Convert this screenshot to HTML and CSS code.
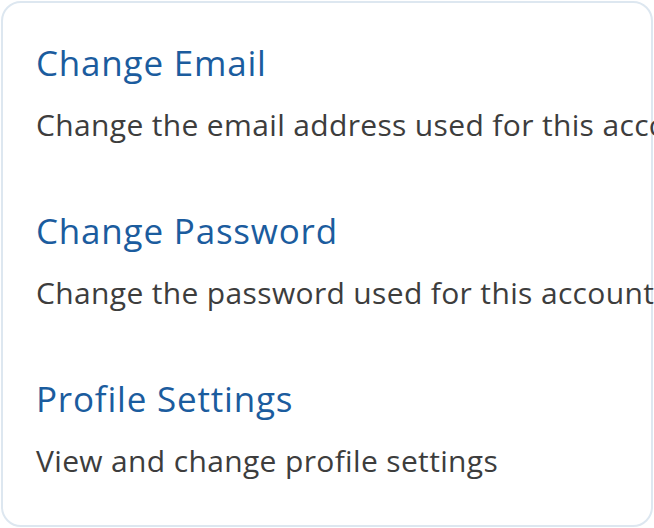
FILE: index.html
```html
<!DOCTYPE html>
<html>
<head>
<meta charset="utf-8">
<link rel="stylesheet" href="styles.css">
</head>
<body>
<div class="card">
  <div class="item">
    <h2 class="title">Change Email</h2>
    <p class="desc">Change the email address used for this account</p>
  </div>
  <div class="item">
    <h2 class="title">Change Password</h2>
    <p class="desc">Change the password used for this account</p>
  </div>
  <div class="item">
    <h2 class="title">Profile Settings</h2>
    <p class="desc">View and change profile settings</p>
  </div>
</div>
</body>
</html>
```
FILE: styles.css
```css
html, body {
  margin: 0;
  padding: 0;
  background: #ffffff;
}
body {
  padding: 1px;
  font-family: "Open Sans", "Noto Sans", sans-serif;
}
.card {
  width: 652px;
  height: 526px;
  border: 2px solid #dde7f0;
  border-radius: 20px;
  padding: 37px 0 0 33px;
  box-sizing: border-box;
  display: flex;
  flex-direction: column;
  gap: 63px;
}
.item {
  display: flex;
  flex-direction: column;
  gap: 19px;
}
.title {
  margin: 0;
  font-size: 35px;
  font-weight: 400;
  line-height: 46px;
  letter-spacing: 0.8px;
  color: #1b5c9e;
  white-space: nowrap;
}
.desc {
  margin: 0;
  font-size: 30px;
  line-height: 40px;
  letter-spacing: 0.35px;
  color: #3d3d3d;
  white-space: nowrap;
}
```
